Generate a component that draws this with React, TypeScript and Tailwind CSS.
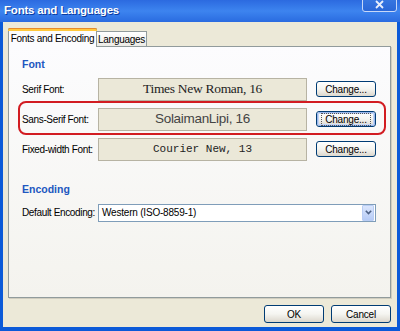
import React from "react";

const ui = { fontFamily: '"Liberation Sans", Arial, sans-serif' };

function XPButton({ label, focused, className }: { label: string; focused?: boolean; className?: string }) {
  return (
    <div
      className={
        "flex items-center justify-center whitespace-nowrap rounded-[3px] border border-[#003c74] bg-gradient-to-b from-[#ffffff] via-[#f5f5f1] to-[#dcd7cd] text-[10px] tracking-[-0.2px] text-black " +
        (className ?? "")
      }
      style={ui}
    >
      <div
        className={
          "flex h-full w-full items-center justify-center rounded-[2px] " +
          (focused ? "border border-[#9ab7eb] shadow-[inset_0_0_0_1px_#c4d6f7]" : "")
        }
      >
        <span className={focused ? "border border-dotted border-[#555] px-[3px] leading-[11px]" : ""}>{label}</span>
      </div>
    </div>
  );
}

function FontRow({
  label,
  value,
  valueClass,
  valueFont,
  focused,
}: {
  label: string;
  value: string;
  valueClass: string;
  valueFont: string;
  focused?: boolean;
}) {
  return (
    <div className="flex h-[23px] items-center">
      <div className="w-[76px] whitespace-nowrap text-[10px] tracking-[-0.35px] text-black" style={ui}>
        {label}
      </div>
      <div
        className={
          "flex h-[23px] w-[209px] items-center justify-center whitespace-nowrap border border-[#b7b3a3] bg-[#ebe8d8] " +
          valueClass
        }
        style={{ fontFamily: valueFont }}
      >
        {value}
      </div>
      <XPButton label="Change..." focused={focused} className="ml-[9px] h-[16px] w-[60px]" />
    </div>
  );
}

export default function App() {
  return (
    <div className="flex h-[331px] w-[400px] flex-col overflow-hidden bg-[#0b5ad8]">
      {/* Title bar */}
      <div className="relative flex h-[22px] items-center bg-gradient-to-b from-[#2c6ae0] via-[#3d84ef] to-[#2a6be0] pl-[4px]">
        <span
          className="whitespace-nowrap text-[11.5px] font-bold tracking-[-0.2px] text-white [text-shadow:1px_1px_0_#0a3aa0]"
          style={ui}
        >
          Fonts and Languages
        </span>
        <div className="absolute right-[3px] top-[-8px] flex h-[20px] w-[35px] items-end justify-center rounded-[3px] border border-[#c8d8f8] bg-gradient-to-b from-[#3f7fe6] to-[#2a67d8] pb-[2px]">
          <svg width="9" height="9" viewBox="0 0 9 9">
            <path d="M1 1 L8 8 M8 1 L1 8" stroke="#e8eefc" strokeWidth="1.8" />
          </svg>
        </div>
      </div>

      {/* Body */}
      <div className="mx-[3px] mb-[4px] flex flex-1 flex-col bg-[#ece9d8] pl-[5px] pr-[6px] pt-[6px]">
        {/* Tabs */}
        <div className="relative z-10 flex h-[18px] items-end">
          <div
            className="relative -mb-px flex h-[19px] w-[89px] items-center justify-center whitespace-nowrap rounded-t-[2px] border-x border-t border-[#919b9c] bg-[#fcfcfe] text-[10px] tracking-[-0.3px] text-black"
            style={ui}
          >
            <div className="absolute left-[-1px] right-[-1px] top-[-1px] h-[3px] rounded-t-[2px] border-t border-[#e68b2c] bg-[#ffc83c]" />
            <span className="mt-[1px]">Fonts and Encoding</span>
          </div>
          <div
            className="flex h-[15px] w-[50px] items-center justify-center whitespace-nowrap border-r border-t border-[#919b9c] bg-gradient-to-b from-[#ffffff] to-[#ecebe6] text-[10px] tracking-[-0.3px] text-black"
            style={ui}
          >
            Languages
          </div>
        </div>

        {/* Panel */}
        <div className="flex h-[252px] flex-col border border-[#919b9c] bg-gradient-to-b from-[#fcfcfe] to-[#f4f3ee] pl-[13px] pt-[10px] shadow-[1px_1px_0_#d0cdbf]">
          <div className="text-[10.5px] font-bold text-[#2157c0]" style={ui}>
            Font
          </div>
          <div className="mt-[5px] flex flex-col gap-[7px]">
            <FontRow
              label="Serif Font:"
              value="Times New Roman, 16"
              valueClass="text-[13.5px] tracking-[-0.3px] text-[#222]"
              valueFont='"Liberation Serif", "Times New Roman", serif'
            />
            <div className="relative">
              <div className="pointer-events-none absolute left-[-4px] right-[4px] top-[-7px] bottom-[-4px] rounded-[8px] border-[2px] border-[#d21c22]" />
              <FontRow
                label="Sans-Serif Font:"
                value="SolaimanLipi, 16"
                valueClass="text-[13.5px] tracking-[-0.3px] text-[#444]"
                valueFont='"Liberation Sans", Arial, sans-serif'
                focused
              />
            </div>
            <FontRow
              label="Fixed-width Font:"
              value="Courier New, 13"
              valueClass="text-[11px] text-[#222]"
              valueFont='"Liberation Mono", "Courier New", monospace'
            />
          </div>

          <div className="mt-[21px] text-[10.5px] font-bold text-[#2157c0]" style={ui}>
            Encoding
          </div>
          <div className="mt-[6px] flex h-[18px] items-center">
            <div className="w-[76px] whitespace-nowrap text-[10px] tracking-[-0.35px] text-black" style={ui}>
              Default Encoding:
            </div>
            <div className="flex h-[18px] w-[278px] items-center border border-[#7f9db9] bg-white pl-[3px]">
              <span className="flex-1 whitespace-nowrap text-[10px] tracking-[-0.2px] text-black" style={ui}>
                Western (ISO-8859-1)
              </span>
              <div className="mr-px flex h-[16px] w-[12px] items-center justify-center rounded-[1px] border border-[#b9cdf4] bg-gradient-to-b from-[#dbe6fd] to-[#b6cbf6]">
                <svg width="7" height="5" viewBox="0 0 7 5">
                  <path d="M0.8 0.8 L3.5 3.6 L6.2 0.8" stroke="#4d6185" strokeWidth="1.6" fill="none" />
                </svg>
              </div>
            </div>
          </div>
        </div>

        {/* Buttons */}
        <div className="mt-[7px] flex justify-end gap-[7px]">
          <XPButton label="OK" className="h-[18px] w-[60px]" />
          <XPButton label="Cancel" className="h-[18px] w-[60px]" />
        </div>
      </div>
    </div>
  );
}
